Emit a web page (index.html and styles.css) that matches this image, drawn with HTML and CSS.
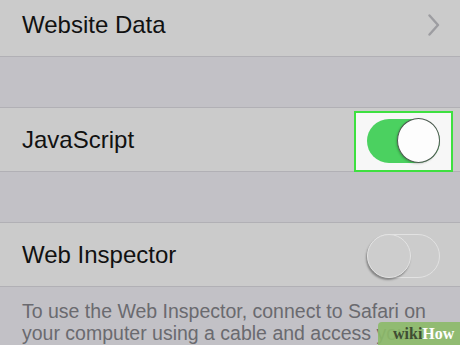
FILE: index.html
```html
<!DOCTYPE html>
<html>
<head>
<meta charset="utf-8">
<link rel="stylesheet" href="styles.css">
</head>
<body>
<div class="screen">
  <section class="group first">
    <div class="row">
      <span class="label">Website Data</span>
      <svg class="chev" width="12" height="22" viewBox="0 0 12 22"><path d="M1.5 1.5 L10 11 L1.5 20.5" fill="none" stroke="#9d9da1" stroke-width="2.4" stroke-linecap="round" stroke-linejoin="round"/></svg>
    </div>
  </section>
  <section class="group">
    <div class="row">
      <span class="label">JavaScript</span>
      <div class="highlight">
        <div class="switch on"><div class="knob"></div></div>
      </div>
    </div>
  </section>
  <section class="group">
    <div class="row">
      <span class="label">Web Inspector</span>
      <div class="switch off"><div class="knob"></div></div>
    </div>
  </section>
  <p class="footer">To use the Web Inspector, connect to Safari on<br>your computer using a cable and access your</p>
  <div class="watermark"><span class="wiki">wiki</span><span class="how">How</span></div>
</div>
</body>
</html>
```
FILE: styles.css
```css
html, body {
  margin: 0;
  padding: 0;
  width: 460px;
  height: 345px;
  overflow: hidden;
  background: #c2c1c6;
  font-family: "Liberation Sans", Arial, sans-serif;
}
.screen {
  position: relative;
  width: 460px;
  height: 345px;
  overflow: hidden;
  display: flex;
  flex-direction: column;
}
.group {
  margin-top: 50px;
  background: #cbcbcb;
  border-top: 1px solid #b1b0b5;
  border-bottom: 1px solid #b1b0b5;
}
.group.first {
  margin-top: -8px;
}
.row {
  height: 63px;
  display: flex;
  align-items: center;
  justify-content: space-between;
  padding: 0 20px 0 22px;
  box-sizing: border-box;
}
.label {
  font-size: 24px;
  color: #111;
}
.chev {
  margin-right: 0;
}
.highlight {
  border: 2px solid #3ee040;
  background: #f7f7f7;
  padding: 6px 11px 7px;
  margin-right: -13px;
  margin-top: 4px;
  display: flex;
}
.switch {
  width: 73px;
  height: 44px;
  border-radius: 22px;
  box-sizing: border-box;
  position: relative;
  flex: none;
}
.switch.on {
  background: #4bd160;
}
.switch.on .knob {
  position: absolute;
  right: 0;
  top: -1px;
  width: 43px;
  height: 45px;
  border-radius: 50%;
  background: #fdfdfd;
  border: 1.5px solid #4d5a50;
  box-sizing: border-box;
  box-shadow: -1px 1px 2px rgba(0,0,0,0.2);
}
.switch.off {
  margin-top: 3px;
  border: 1.5px solid #e2e2e2;
  background: #cccccc;
}
.switch.off .knob {
  position: absolute;
  left: -1.5px;
  top: -1px;
  width: 44px;
  height: 44px;
  border-radius: 50%;
  background: #cdcdcd;
  box-sizing: border-box;
  border: 1px solid #e4e4e4;
  box-shadow: -1px 2px 2px rgba(0,0,0,0.35);
}
.footer {
  margin: 0;
  padding: 13px 0 0 22px;
  font-size: 19.5px;
  line-height: 22px;
  color: #6a6a6f;
  white-space: nowrap;
}
.watermark {
  position: absolute;
  left: 378px;
  top: 322px;
  width: 82px;
  height: 23px;
  background: rgba(140, 186, 104, 0.9);
  border-top-left-radius: 4px;
  font-family: "Liberation Serif", "DejaVu Serif", serif;
  font-weight: bold;
  font-size: 16px;
  line-height: 23px;
  padding-left: 15px;
  box-sizing: border-box;
  white-space: nowrap;
}
.wiki { color: #3f4d33; }
.how { color: #ffffff; }
```
